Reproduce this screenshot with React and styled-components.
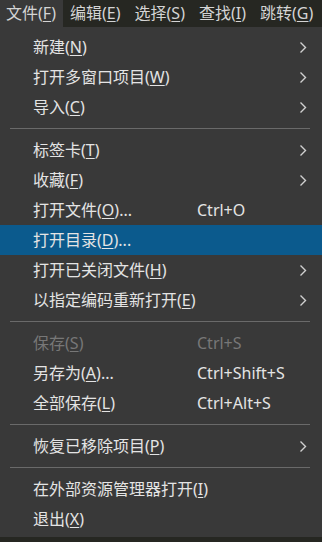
import React from "react";
import styled, { createGlobalStyle } from "styled-components";

const GlobalStyle = createGlobalStyle`
  html, body {
    margin: 0;
    padding: 0;
    background: #262722;
  }
  body {
    width: 322px;
    height: 542px;
    overflow: hidden;
    font-family: "Noto Sans", "Noto Sans CJK SC", sans-serif;
    font-size: 16px;
  }
`;

const Page = styled.div`
  display: flex;
  flex-direction: column;
  width: 322px;
  height: 542px;
  background: #262722;
`;

const MenuBar = styled.nav`
  display: flex;
  height: 27px;
  background: #262722;
  flex-shrink: 0;
  overflow: hidden;
`;

const BarItem = styled.div`
  display: flex;
  align-items: center;
  padding: 0 7px 0 ${(p) => (p.$first ? "6px" : "7px")};
  color: #d4d4d4;
  background: ${(p) => (p.$active ? "#393939" : "transparent")};
  white-space: nowrap;
  line-height: 27px;
`;

const Panel = styled.div`
  display: flex;
  flex-direction: column;
  background: #393939;
  padding: 5px 0 3px;
`;

const Row = styled.div`
  display: grid;
  grid-template-columns: 164px 1fr 22px;
  align-items: center;
  height: 30px;
  padding-left: 33px;
  box-sizing: border-box;
  color: ${(p) => (p.$disabled ? "#777777" : "#e4e4e4")};
  background: ${(p) => (p.$selected ? "#0b5a8d" : "transparent")};
  white-space: nowrap;
`;

const Label = styled.span`
  line-height: 30px;
`;

const Key = styled.span`
  text-decoration: underline;
  text-underline-offset: 2px;
`;

const Shortcut = styled.span`
  line-height: 30px;
`;

const Arrow = styled.svg`
  width: 8px;
  height: 13px;
  justify-self: start;
  margin-left: -1px;
`;

const Separator = styled.div`
  height: 1px;
  margin: 6px 12px 6px 10px;
  background: #6a6a6a;
`;

const Chevron = () => (
  <Arrow viewBox="0 0 8 13">
    <polyline points="1.5,1.5 6.5,6.5 1.5,11.5" fill="none" stroke="#d0d0d0" strokeWidth="1.4" />
  </Arrow>
);

const bar = [
  ["文件", "F"],
  ["编辑", "E"],
  ["选择", "S"],
  ["查找", "I"],
  ["跳转", "G"],
];

const menu = [
  { t: "新建", k: "N", sub: true },
  { t: "打开多窗口项目", k: "W", sub: true },
  { t: "导入", k: "C", sub: true },
  "sep",
  { t: "标签卡", k: "T", sub: true },
  { t: "收藏", k: "F", sub: true },
  { t: "打开文件", k: "O", dots: true, sc: "Ctrl+O" },
  { t: "打开目录", k: "D", dots: true, selected: true },
  { t: "打开已关闭文件", k: "H", sub: true },
  { t: "以指定编码重新打开", k: "E", sub: true },
  "sep",
  { t: "保存", k: "S", sc: "Ctrl+S", disabled: true },
  { t: "另存为", k: "A", dots: true, sc: "Ctrl+Shift+S" },
  { t: "全部保存", k: "L", sc: "Ctrl+Alt+S" },
  "sep",
  { t: "恢复已移除项目", k: "P", sub: true },
  "sep",
  { t: "在外部资源管理器打开", k: "I" },
  { t: "退出", k: "X" },
];

export default function App() {
  return (
    <Page>
      <GlobalStyle />
      <MenuBar>
        {bar.map(([t, k], i) => (
          <BarItem key={k} $active={i === 0} $first={i === 0}>
            {t}(<Key>{k}</Key>)
          </BarItem>
        ))}
      </MenuBar>
      <Panel>
        {menu.map((m, i) =>
          m === "sep" ? (
            <Separator key={i} />
          ) : (
            <Row key={i} $selected={m.selected} $disabled={m.disabled}>
              <Label>
                {m.t}(<Key>{m.k}</Key>){m.dots ? "..." : ""}
              </Label>
              <Shortcut>{m.sc || ""}</Shortcut>
              {m.sub ? <Chevron /> : <span />}
            </Row>
          )
        )}
      </Panel>
    </Page>
  );
}
